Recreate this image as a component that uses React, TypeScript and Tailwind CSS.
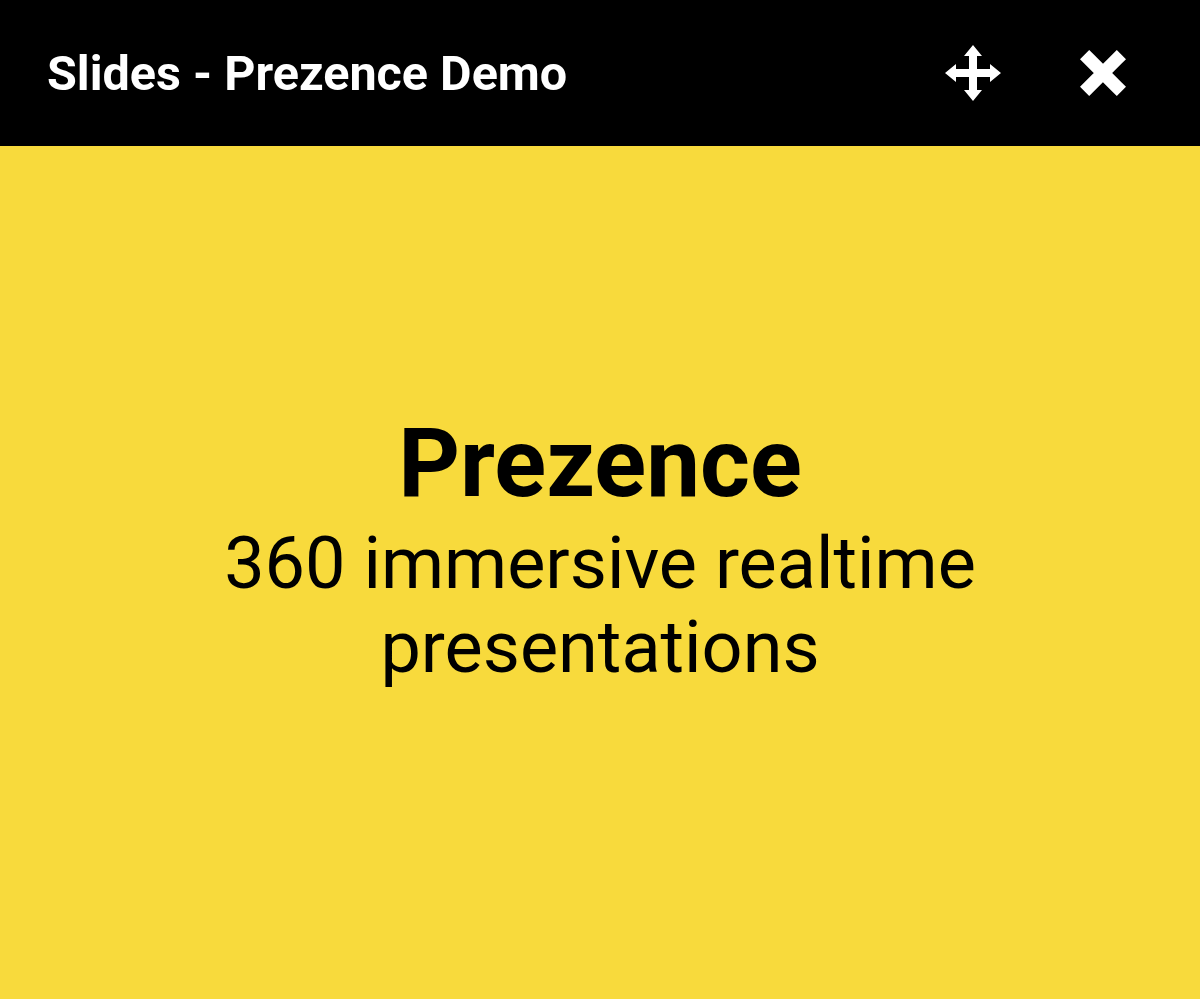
import { ReactNode } from "react";

function IconButton({ children, label }: { children: ReactNode; label: string }) {
  return (
    <button type="button" aria-label={label} className="flex items-center justify-center text-white">
      {children}
    </button>
  );
}

export default function App() {
  return (
    <div className="flex min-h-[999px] w-full flex-col bg-white font-['Roboto',sans-serif]">
      {/* title bar */}
      <header className="flex h-[146px] items-center justify-between bg-black pl-[47px] pr-[74px]">
        <h1 className="pt-[2px] text-[48.5px] font-bold text-white">Slides - Prezence Demo</h1>
        <div className="flex items-center gap-[79px]">
          <IconButton label="Move">
            <svg width="56" height="56" viewBox="0 0 56 56" fill="currentColor">
              <path d="M28 0 L37 11 L32 11 L32 24 L45 24 L45 19 L56 28 L45 37 L45 32 L32 32 L32 45 L37 45 L28 56 L19 45 L24 45 L24 32 L11 32 L11 37 L0 28 L11 19 L11 24 L24 24 L24 11 L19 11 Z" />
            </svg>
          </IconButton>
          <IconButton label="Close">
            <svg width="46" height="46" viewBox="0 0 46 46" fill="none" stroke="currentColor" strokeWidth="13" strokeLinecap="square">
              <path d="M9.2 9.2 L36.8 36.8 M36.8 9.2 L9.2 36.8" />
            </svg>
          </IconButton>
        </div>
      </header>

      {/* slide */}
      <main className="flex h-[853px] flex-col items-center justify-center bg-[#f8da3c] pb-[44px] text-center text-black">
        <h2 className="mb-[5px] text-[96px] leading-[1.1] font-bold">Prezence</h2>
        <p className="max-w-[800px] text-[72px] leading-[84px]">360 immersive realtime presentations</p>
      </main>
    </div>
  );
}
